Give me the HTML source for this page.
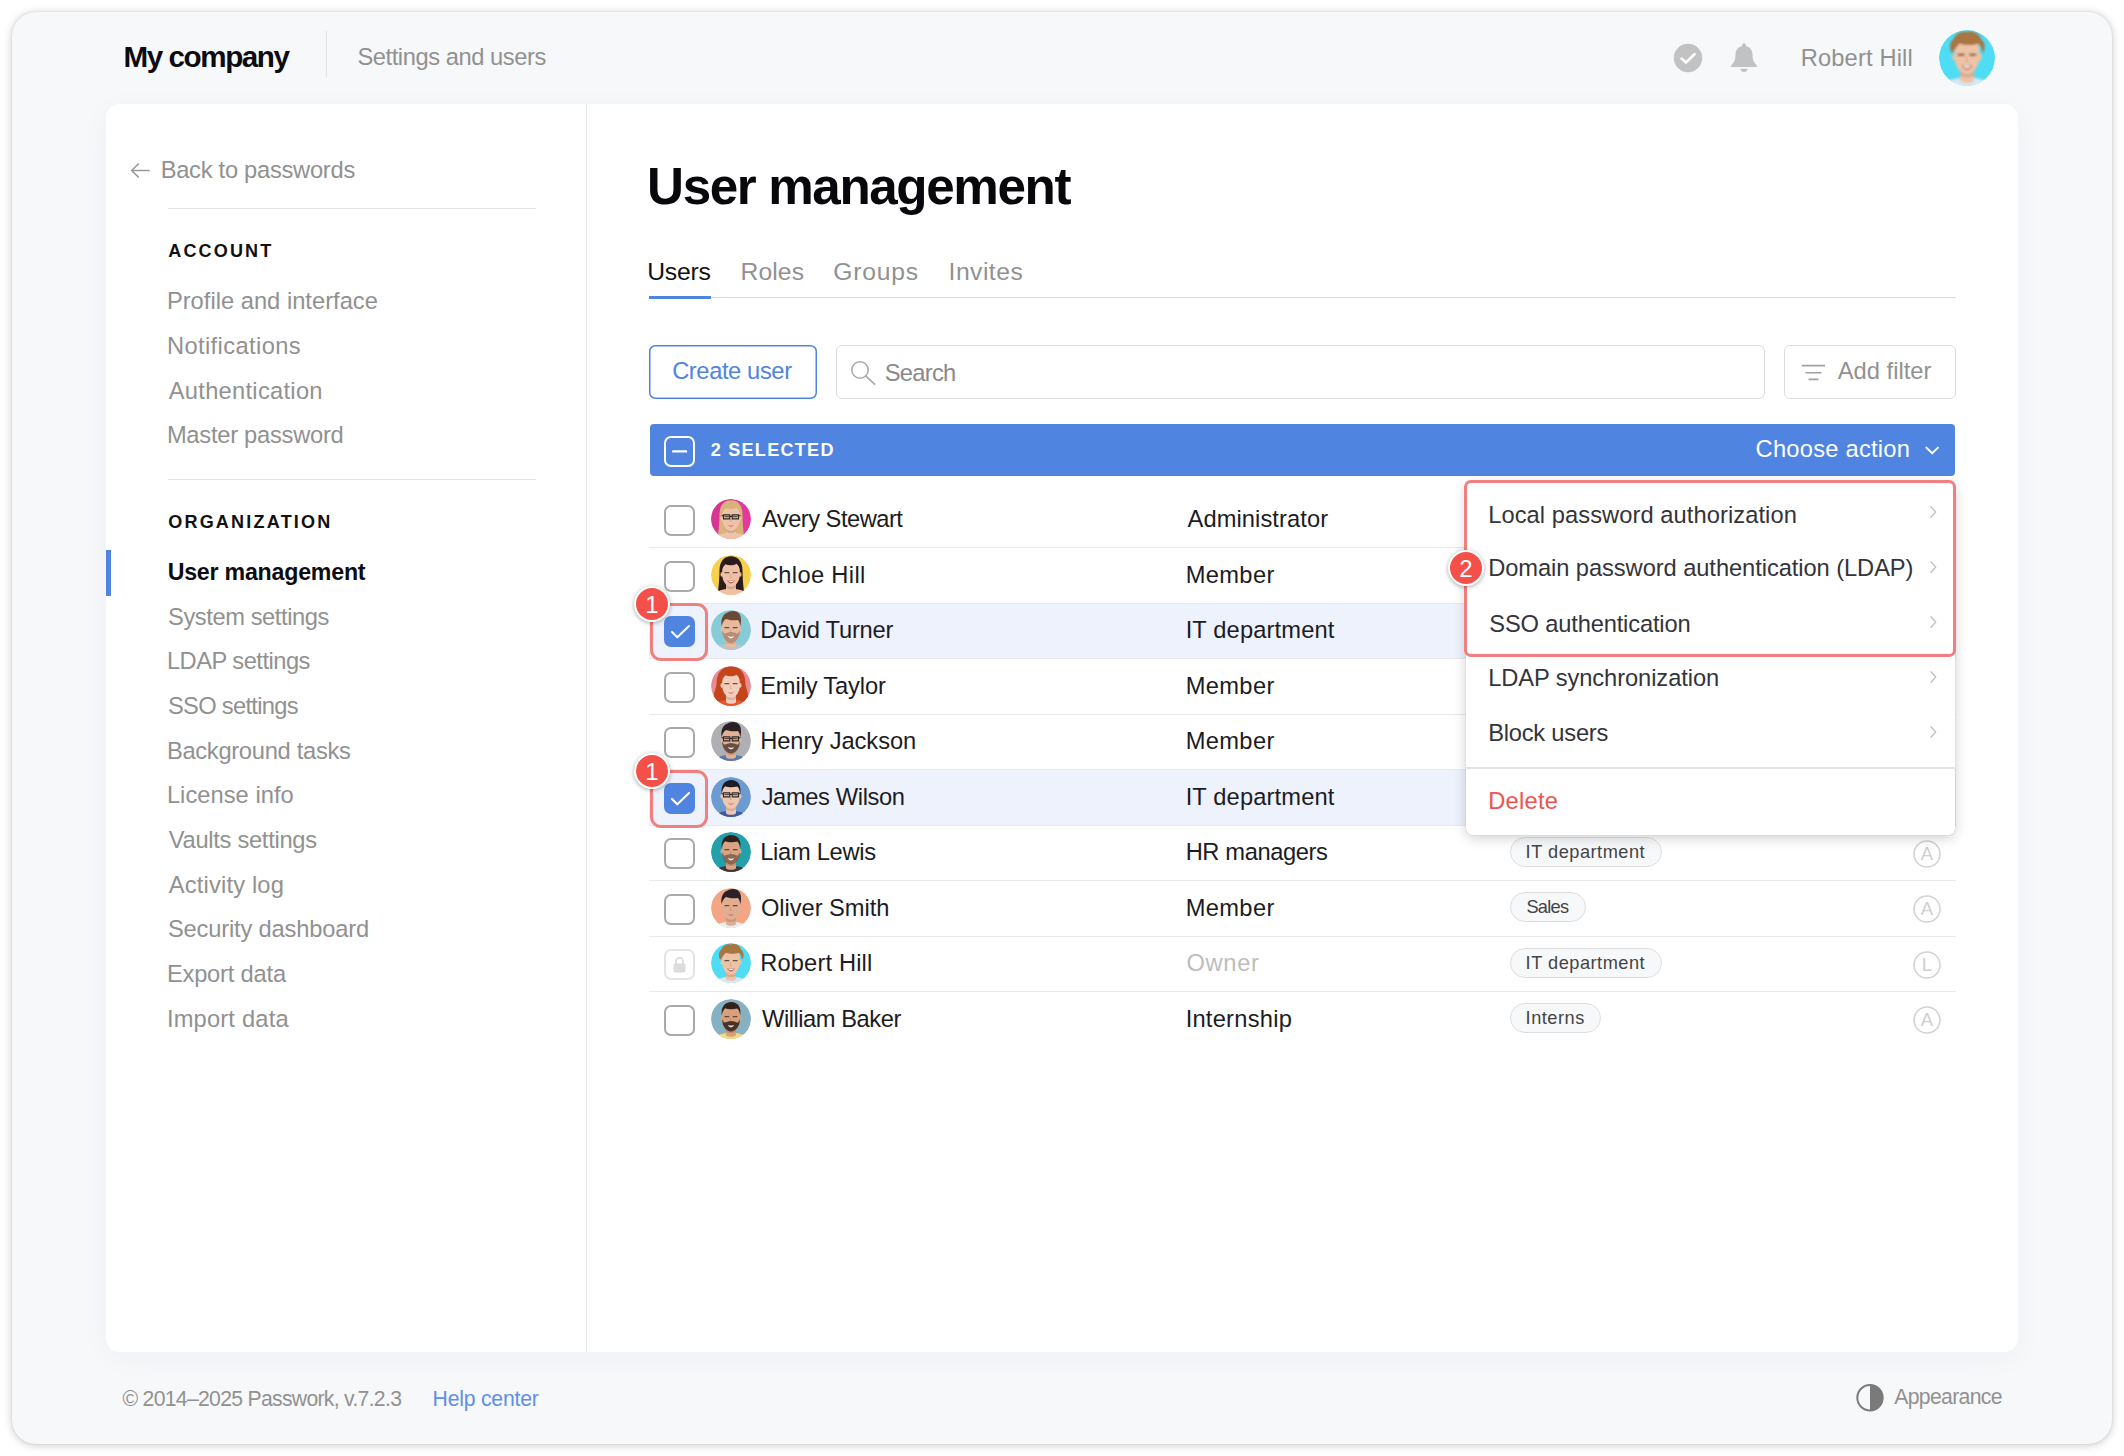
<!DOCTYPE html>
<html lang="en"><head><meta charset="utf-8"><title>User management</title>
<style>
html,body{margin:0;padding:0}
body{width:2124px;height:1456px;position:relative;overflow:hidden;background:#fff;font-family:'Liberation Sans',sans-serif}
.a,.t{position:absolute}
.t{white-space:pre;z-index:5}
.frame{left:12px;top:12px;width:2100px;height:1432px;border-radius:24px;background:#f7f8fa;box-shadow:0 1px 8px rgba(0,0,0,.22),0 0 2px rgba(0,0,0,.10)}
.panel{left:106px;top:104px;width:1912px;height:1248px;border-radius:14px;background:#fff;box-shadow:0 6px 30px rgba(40,50,80,.035)}
.hl{height:1px;background:#e4e4e4}
.vl{width:1px;background:#e4e4e4}
.cb{width:27px;height:27px;border:2px solid #a9a9a9;border-radius:7px;background:#fff;left:664px}
.cb.on{border-color:#4f84e0;background:#4f84e0}
.cb.dis{border-color:#e4e4e4}
.rowsel{left:649px;width:1307px;height:55.5px;background:#eef2fc}
.sep{left:649px;width:1307px;height:1px;background:#e9e9e9;z-index:1}
.red{border:3px solid #f17f7f;border-radius:9px;box-sizing:border-box;z-index:40}
.badge{width:32px;height:32px;border-radius:50%;background:#f4504a;border:2px solid #fff;box-shadow:0 1px 4px rgba(0,0,0,.35);z-index:50;color:#fff;font-size:24px;line-height:34px;text-align:center}
.tag{height:28px;border:1px solid #dedede;border-radius:15px;background:#f7f8fa;left:1509.5px}
.circ{width:24.600px;height:24.600px;border:1.500px solid #d2d2d2;border-radius:50%;left:1913.100px;color:#cfcfcf;font-size:18.500px;line-height:25px;text-align:center}
.av{width:40px;height:40px;border-radius:50%;overflow:hidden;left:710.5px}
.menu{left:1466px;top:482px;width:489px;height:353px;background:#fff;border-radius:7px;box-shadow:0 3px 13px rgba(0,0,0,.19),0 0 2px rgba(0,0,0,.12);z-index:30}
svg{display:block}
h1{margin:0;font-weight:700}
</style></head><body>
<svg width="0" height="0" style="position:absolute"><defs><filter id="bl" x="-10%" y="-10%" width="120%" height="120%"><feGaussianBlur stdDeviation=".6"/></filter><symbol id="av0" viewBox="0 0 40 40"><circle cx="20" cy="20" r="20" fill="#e23a9c"/><ellipse cx="12" cy="14" rx="16" ry="18" fill="#c22a86" opacity=".35"/><g filter="url(#bl)" transform="translate(20 18) scale(1.25) translate(-20 -18)"><path d="M10.800 16c0-7.500 3.800-11.500 9.200-11.500s9.200 4 9.200 11.500c0 6 .6 12 1.200 17l-6 2H15.600l-6-2c.6-5 1.200-11 1.200-17z" fill="#d9b27c"/><path d="M4 41c0-6 5-9 11-10h10c6 1 11 4 11 10z" fill="#f0c3a8"/><path d="M16 26h8v6.500c-1.500 1.800-6.500 1.800-8 0z" fill="#f0c3a8"/><path d="M16 29.500c2.500 1.600 5.500 1.600 8 0v-2h-8z" fill="#000" opacity=".12"/><path d="M13 15.500c0-5 3-8 7-8s7 3 7 8v4c0 5-3.500 9.500-7 9.500s-7-4.500-7-9.500z" fill="#f0c3a8"/><ellipse cx="12.800" cy="19" rx="1.200" ry="2" fill="#f0c3a8"/><ellipse cx="27.200" cy="19" rx="1.200" ry="2" fill="#f0c3a8"/><path d="M17.600 24.200c1.500.900 3.300.900 4.800 0-.5 1.100-1.400 1.600-2.400 1.600s-1.900-.5-2.400-1.600z" fill="#c9626a" opacity=".75"/><path d="M15.200 17.700h3M21.800 17.700h3" stroke="#3a2a25" stroke-width="1.100" stroke-linecap="round" opacity=".75"/><path d="M19.600 19v2.600h1.200" stroke="#000" stroke-width=".5" fill="none" opacity=".18"/><path d="M12 19c-1.500-8 2-13 8-13s9.500 5 8 13c-.3-3.500-1.500-6.500-3.500-8.500-2.500 1.300-6 1.800-9 .5-2 2-3.200 4.500-3.500 8z" fill="#d9b27c"/><path d="M14 16.300h5v3.200h-5zM21 16.300h5v3.200h-5zM19 17.500h2M14 17.300l-1.500-.5M26 17.300l1.500-.5" fill="none" stroke="#2b2b2b" stroke-width=".9"/></g></symbol><symbol id="av1" viewBox="0 0 40 40"><circle cx="20" cy="20" r="20" fill="#f8d04f"/><g filter="url(#bl)" transform="translate(20 18) scale(1.25) translate(-20 -18)"><path d="M10.800 16c0-7.500 3.800-11.500 9.200-11.500s9.200 4 9.200 11.500c0 6 .6 12 1.200 17l-6 2H15.600l-6-2c.6-5 1.200-11 1.200-17z" fill="#2a1d1a"/><path d="M4 41c0-6 5-9 11-10h10c6 1 11 4 11 10z" fill="#f2bfa3"/><path d="M16 26h8v6.500c-1.500 1.800-6.500 1.800-8 0z" fill="#f1c0a4"/><path d="M16 29.500c2.500 1.600 5.500 1.600 8 0v-2h-8z" fill="#000" opacity=".12"/><path d="M13 15.500c0-5 3-8 7-8s7 3 7 8v4c0 5-3.500 9.500-7 9.500s-7-4.500-7-9.500z" fill="#f1c0a4"/><ellipse cx="12.800" cy="19" rx="1.200" ry="2" fill="#f1c0a4"/><ellipse cx="27.200" cy="19" rx="1.200" ry="2" fill="#f1c0a4"/><path d="M17 23.600c2 .8 4 .8 6 0-.6 1.900-1.700 2.700-3 2.700s-2.400-.8-3-2.700z" fill="#a8474f" opacity=".8"/><path d="M17.700 24c1.500.5 3.100.5 4.600 0-.4.900-1.300 1.300-2.300 1.300s-1.900-.4-2.300-1.300z" fill="#fff"/><path d="M15.200 17.700h3M21.800 17.700h3" stroke="#3a2a25" stroke-width="1.100" stroke-linecap="round" opacity=".75"/><path d="M19.600 19v2.600h1.200" stroke="#000" stroke-width=".5" fill="none" opacity=".18"/><path d="M12 19c-1.500-8 2-13 8-13s9.500 5 8 13c-.3-3.500-1.500-6.500-3.500-8.500-2.500 1.300-6 1.800-9 .5-2 2-3.200 4.500-3.500 8z" fill="#2a1d1a"/></g></symbol><symbol id="av2" viewBox="0 0 40 40"><circle cx="20" cy="20" r="20" fill="#86cbd6"/><g filter="url(#bl)" transform="translate(20 18) scale(1.25) translate(-20 -18)"><path d="M4 41c0-6 5-9 11-10h10c6 1 11 4 11 10z" fill="#b9c3c8"/><path d="M16 26h8v6.500c-1.500 1.800-6.500 1.800-8 0z" fill="#e9b99d"/><path d="M16 29.500c2.500 1.600 5.500 1.600 8 0v-2h-8z" fill="#000" opacity=".12"/><path d="M13 15.500c0-5 3-8 7-8s7 3 7 8v4c0 5-3.500 9.500-7 9.500s-7-4.500-7-9.500z" fill="#e9b99d"/><ellipse cx="12.800" cy="19" rx="1.200" ry="2" fill="#e9b99d"/><ellipse cx="27.200" cy="19" rx="1.200" ry="2" fill="#e9b99d"/><path d="M13 19.500c.5 1.500 1 2.500 2 3 1.500-.8 3-1.200 5-1.200s3.500.4 5 1.200c1-.5 1.500-1.500 2-3v1c0 5-3.500 9-7 9s-7-4-7-9z" fill="#8a624b" opacity="0.5"/><path d="M17.500 24.300c1.500.800 3.500.800 5 0-.5 1.300-1.500 1.900-2.500 1.900s-2-.6-2.500-1.900z" fill="#fff" opacity=".85"/><path d="M15.200 17.700h3M21.800 17.700h3" stroke="#3a2a25" stroke-width="1.100" stroke-linecap="round" opacity=".75"/><path d="M19.600 19v2.600h1.200" stroke="#000" stroke-width=".5" fill="none" opacity=".18"/><path d="M12.500 16.500c-1-6 1.500-9.500 4-10.500 2.500-2 7-2.300 9.500 0 2.200 2 2.500 6 1.500 10.500-.4-2.500-1-4-2-5-3 .5-6.500.3-9.500-.8-1.800 1.200-3 3.200-3.500 5.800z" fill="#6b4a36"/></g></symbol><symbol id="av3" viewBox="0 0 40 40"><circle cx="20" cy="20" r="20" fill="#ec8a93"/><g filter="url(#bl)" transform="translate(20 18) scale(1.25) translate(-20 -18)"><path d="M8.500 17c0-8.500 5-13 11.500-13s11.500 4.500 11.500 13c0 4 3 8 2 13s-4 6-8 6H14.500c-4 0-7-1-8-6s2-9 2-13z" fill="#c4451f"/><path d="M4 41c0-6 5-9 11-10h10c6 1 11 4 11 10z" fill="#f0532a"/><path d="M16 26h8v6.500c-1.500 1.800-6.500 1.800-8 0z" fill="#f3cdb9"/><path d="M16 29.500c2.500 1.600 5.500 1.600 8 0v-2h-8z" fill="#000" opacity=".12"/><path d="M13 15.500c0-5 3-8 7-8s7 3 7 8v4c0 5-3.500 9.500-7 9.500s-7-4.500-7-9.500z" fill="#f3cdb9"/><ellipse cx="12.800" cy="19" rx="1.200" ry="2" fill="#f3cdb9"/><ellipse cx="27.200" cy="19" rx="1.200" ry="2" fill="#f3cdb9"/><path d="M17.600 24.200c1.500.900 3.300.900 4.800 0-.5 1.100-1.400 1.600-2.400 1.600s-1.900-.5-2.400-1.600z" fill="#c9626a" opacity=".75"/><path d="M15.200 17.700h3M21.800 17.700h3" stroke="#3a2a25" stroke-width="1.100" stroke-linecap="round" opacity=".75"/><path d="M19.600 19v2.600h1.200" stroke="#000" stroke-width=".5" fill="none" opacity=".18"/><path d="M12 19c-1.500-8 2-13 8-13s9.500 5 8 13c-.3-3.500-1.500-6.500-3.500-8.500-2.500 1.300-6 1.800-9 .5-2 2-3.200 4.500-3.500 8z" fill="#c4451f"/></g></symbol><symbol id="av4" viewBox="0 0 40 40"><circle cx="20" cy="20" r="20" fill="#b0b0b4"/><g filter="url(#bl)" transform="translate(20 18) scale(1.25) translate(-20 -18)"><path d="M4 41c0-6 5-9 11-10h10c6 1 11 4 11 10z" fill="#5a78b0"/><path d="M16 26h8v6.500c-1.500 1.800-6.500 1.800-8 0z" fill="#e2b094"/><path d="M16 29.500c2.500 1.600 5.500 1.600 8 0v-2h-8z" fill="#000" opacity=".12"/><path d="M13 15.500c0-5 3-8 7-8s7 3 7 8v4c0 5-3.500 9.500-7 9.500s-7-4.500-7-9.500z" fill="#e2b094"/><ellipse cx="12.800" cy="19" rx="1.200" ry="2" fill="#e2b094"/><ellipse cx="27.200" cy="19" rx="1.200" ry="2" fill="#e2b094"/><path d="M13 19.500c.5 1.500 1 2.500 2 3 1.500-.8 3-1.200 5-1.200s3.500.4 5 1.200c1-.5 1.500-1.500 2-3v1c0 5-3.500 9-7 9s-7-4-7-9z" fill="#5a4236" opacity="0.9"/><path d="M17.500 24.300c1.500.800 3.500.800 5 0-.5 1.300-1.500 1.900-2.500 1.900s-2-.6-2.500-1.900z" fill="#fff" opacity=".85"/><path d="M15.200 17.700h3M21.800 17.700h3" stroke="#3a2a25" stroke-width="1.100" stroke-linecap="round" opacity=".75"/><path d="M19.600 19v2.600h1.200" stroke="#000" stroke-width=".5" fill="none" opacity=".18"/><path d="M12.500 16.500c-1-6 1.500-9.500 4-10.500 2.500-2 7-2.300 9.500 0 2.200 2 2.500 6 1.500 10.500-.4-2.500-1-4-2-5-3 .5-6.500.3-9.500-.8-1.800 1.200-3 3.200-3.500 5.800z" fill="#2a2422"/><path d="M14 16.300h5v3.200h-5zM21 16.300h5v3.200h-5zM19 17.500h2M14 17.300l-1.500-.5M26 17.300l1.500-.5" fill="none" stroke="#2b2b2b" stroke-width=".9"/></g></symbol><symbol id="av5" viewBox="0 0 40 40"><circle cx="20" cy="20" r="20" fill="#6c9bd2"/><g filter="url(#bl)" transform="translate(20 18) scale(1.25) translate(-20 -18)"><path d="M4 41c0-6 5-9 11-10h10c6 1 11 4 11 10z" fill="#3f5aa8"/><path d="M16 26h8v6.500c-1.500 1.800-6.500 1.800-8 0z" fill="#efc6ae"/><path d="M16 29.500c2.500 1.600 5.500 1.600 8 0v-2h-8z" fill="#000" opacity=".12"/><path d="M13 15.500c0-5 3-8 7-8s7 3 7 8v4c0 5-3.500 9.500-7 9.500s-7-4.500-7-9.500z" fill="#efc6ae"/><ellipse cx="12.800" cy="19" rx="1.200" ry="2" fill="#efc6ae"/><ellipse cx="27.200" cy="19" rx="1.200" ry="2" fill="#efc6ae"/><path d="M17.600 24.200c1.500.900 3.300.900 4.800 0-.5 1.100-1.400 1.600-2.400 1.600s-1.900-.5-2.400-1.600z" fill="#c9626a" opacity=".75"/><path d="M15.200 17.700h3M21.800 17.700h3" stroke="#3a2a25" stroke-width="1.100" stroke-linecap="round" opacity=".75"/><path d="M19.600 19v2.600h1.200" stroke="#000" stroke-width=".5" fill="none" opacity=".18"/><path d="M12.600 16.500c-.8-6.500 2.500-10.500 7.600-10.500s8.200 4 7.200 10.500c-.5-2.500-1.300-4.300-2.400-5.300-3 .8-7 .8-9.600-.2-1.400 1.200-2.300 3-2.800 5.500z" fill="#1e1c28"/><path d="M14 16.300h5v3.200h-5zM21 16.300h5v3.200h-5zM19 17.500h2M14 17.300l-1.500-.5M26 17.300l1.500-.5" fill="none" stroke="#2b2b2b" stroke-width=".9"/></g></symbol><symbol id="av6" viewBox="0 0 40 40"><circle cx="20" cy="20" r="20" fill="#24a0ac"/><g filter="url(#bl)" transform="translate(20 18) scale(1.25) translate(-20 -18)"><path d="M4 41c0-6 5-9 11-10h10c6 1 11 4 11 10z" fill="#3a3a3e"/><path d="M16 26h8v6.500c-1.500 1.800-6.500 1.800-8 0z" fill="#d9a384"/><path d="M16 29.500c2.500 1.600 5.500 1.600 8 0v-2h-8z" fill="#000" opacity=".12"/><path d="M13 15.500c0-5 3-8 7-8s7 3 7 8v4c0 5-3.500 9.500-7 9.500s-7-4.500-7-9.500z" fill="#d9a384"/><ellipse cx="12.800" cy="19" rx="1.200" ry="2" fill="#d9a384"/><ellipse cx="27.200" cy="19" rx="1.200" ry="2" fill="#d9a384"/><path d="M13 19.500c.5 1.500 1 2.500 2 3 1.500-.8 3-1.200 5-1.200s3.500.4 5 1.200c1-.5 1.500-1.500 2-3v1c0 5-3.500 9-7 9s-7-4-7-9z" fill="#5b3f30" opacity="0.6"/><path d="M17.500 24.300c1.500.800 3.500.800 5 0-.5 1.300-1.500 1.900-2.500 1.900s-2-.6-2.500-1.900z" fill="#fff" opacity=".85"/><path d="M15.200 17.700h3M21.800 17.700h3" stroke="#3a2a25" stroke-width="1.100" stroke-linecap="round" opacity=".75"/><path d="M19.600 19v2.600h1.200" stroke="#000" stroke-width=".5" fill="none" opacity=".18"/><path d="M12.600 16.500c-.8-6.500 2.500-10.500 7.600-10.500s8.200 4 7.200 10.500c-.5-2.500-1.300-4.300-2.400-5.300-3 .8-7 .8-9.600-.2-1.400 1.200-2.300 3-2.800 5.500z" fill="#2f241f"/></g></symbol><symbol id="av7" viewBox="0 0 40 40"><circle cx="20" cy="20" r="20" fill="#f3a685"/><g filter="url(#bl)" transform="translate(20 18) scale(1.25) translate(-20 -18)"><path d="M4 41c0-6 5-9 11-10h10c6 1 11 4 11 10z" fill="#e9ecef"/><path d="M16 26h8v6.500c-1.500 1.800-6.500 1.800-8 0z" fill="#e2ae92"/><path d="M16 29.500c2.500 1.600 5.500 1.600 8 0v-2h-8z" fill="#000" opacity=".12"/><path d="M13 15.500c0-5 3-8 7-8s7 3 7 8v4c0 5-3.500 9.500-7 9.500s-7-4.500-7-9.500z" fill="#e2ae92"/><ellipse cx="12.800" cy="19" rx="1.200" ry="2" fill="#e2ae92"/><ellipse cx="27.200" cy="19" rx="1.200" ry="2" fill="#e2ae92"/><path d="M17.600 24.200c1.500.900 3.300.900 4.800 0-.5 1.100-1.400 1.600-2.400 1.600s-1.900-.5-2.400-1.600z" fill="#c9626a" opacity=".75"/><path d="M15.200 17.700h3M21.800 17.700h3" stroke="#3a2a25" stroke-width="1.100" stroke-linecap="round" opacity=".75"/><path d="M19.600 19v2.600h1.200" stroke="#000" stroke-width=".5" fill="none" opacity=".18"/><path d="M12.500 16.500c-1-6 1.500-9.500 4-10.500 2.500-2 7-2.300 9.500 0 2.200 2 2.500 6 1.500 10.500-.4-2.500-1-4-2-5-3 .5-6.500.3-9.500-.8-1.800 1.200-3 3.200-3.500 5.800z" fill="#2a2328"/></g></symbol><symbol id="av8" viewBox="0 0 40 40"><circle cx="20" cy="20" r="20" fill="#4fdcf5"/><g filter="url(#bl)" transform="translate(20 18) scale(1.25) translate(-20 -18)"><path d="M4 41c0-6 5-9 11-10h10c6 1 11 4 11 10z" fill="#d6e8f2"/><path d="M16 26h8v6.500c-1.500 1.800-6.500 1.800-8 0z" fill="#eec2a4"/><path d="M16 29.500c2.500 1.600 5.500 1.600 8 0v-2h-8z" fill="#000" opacity=".12"/><path d="M13 15.500c0-5 3-8 7-8s7 3 7 8v4c0 5-3.500 9.500-7 9.500s-7-4.500-7-9.500z" fill="#eec2a4"/><ellipse cx="12.800" cy="19" rx="1.200" ry="2" fill="#eec2a4"/><ellipse cx="27.200" cy="19" rx="1.200" ry="2" fill="#eec2a4"/><path d="M17 23.600c2 .8 4 .8 6 0-.6 1.900-1.700 2.700-3 2.700s-2.400-.8-3-2.700z" fill="#a8474f" opacity=".8"/><path d="M17.700 24c1.500.5 3.100.5 4.600 0-.4.900-1.300 1.300-2.300 1.300s-1.900-.4-2.300-1.300z" fill="#fff"/><path d="M15.200 17.700h3M21.800 17.700h3" stroke="#3a2a25" stroke-width="1.100" stroke-linecap="round" opacity=".75"/><path d="M19.600 19v2.600h1.200" stroke="#000" stroke-width=".5" fill="none" opacity=".18"/><path d="M11.500 17c-2-3-1.500-6.500 1-8.500 1-3 4.500-4.500 7.500-3.800 3.500-.9 7 .8 8 4 2.500 2 2.800 5.500.8 8.300-.3-2.600-1-4.500-2.300-5.700-3 1.200-7.500 1.200-10.500 0-1.500 1.200-3 3.200-4.500 5.700z" fill="#a9753f"/></g></symbol><symbol id="av9" viewBox="0 0 40 40"><circle cx="20" cy="20" r="20" fill="#86b1c2"/><g filter="url(#bl)" transform="translate(20 18) scale(1.25) translate(-20 -18)"><path d="M4 41c0-6 5-9 11-10h10c6 1 11 4 11 10z" fill="#f0dc82"/><path d="M16 26h8v6.500c-1.500 1.800-6.500 1.800-8 0z" fill="#d9a07c"/><path d="M16 29.500c2.500 1.600 5.500 1.600 8 0v-2h-8z" fill="#000" opacity=".12"/><path d="M13 15.500c0-5 3-8 7-8s7 3 7 8v4c0 5-3.500 9.500-7 9.500s-7-4.500-7-9.500z" fill="#d9a07c"/><ellipse cx="12.800" cy="19" rx="1.200" ry="2" fill="#d9a07c"/><ellipse cx="27.200" cy="19" rx="1.200" ry="2" fill="#d9a07c"/><path d="M13 19.500c.5 1.500 1 2.500 2 3 1.500-.8 3-1.200 5-1.200s3.500.4 5 1.200c1-.5 1.500-1.500 2-3v1c0 5-3.500 9-7 9s-7-4-7-9z" fill="#3b271c" opacity="0.9"/><path d="M17.500 24.300c1.500.800 3.500.800 5 0-.5 1.300-1.500 1.900-2.500 1.900s-2-.6-2.500-1.900z" fill="#fff" opacity=".85"/><path d="M15.200 17.700h3M21.800 17.700h3" stroke="#3a2a25" stroke-width="1.100" stroke-linecap="round" opacity=".75"/><path d="M19.600 19v2.600h1.200" stroke="#000" stroke-width=".5" fill="none" opacity=".18"/><path d="M12.600 16.500c-.8-6.500 2.500-10.500 7.600-10.500s8.200 4 7.200 10.500c-.5-2.500-1.300-4.300-2.400-5.300-3 .8-7 .8-9.600-.2-1.400 1.200-2.300 3-2.800 5.500z" fill="#33241c"/></g></symbol><symbol id="robert" viewBox="0 0 40 40"><circle cx="20" cy="20" r="20" fill="#4fdcf5"/><g filter="url(#bl)" transform="translate(20 18) scale(1.25) translate(-20 -18)"><path d="M4 41c0-6 5-9 11-10h10c6 1 11 4 11 10z" fill="#d6e8f2"/><path d="M16 26h8v6.500c-1.500 1.800-6.500 1.800-8 0z" fill="#eec2a4"/><path d="M16 29.500c2.500 1.600 5.500 1.600 8 0v-2h-8z" fill="#000" opacity=".12"/><path d="M13 15.500c0-5 3-8 7-8s7 3 7 8v4c0 5-3.500 9.500-7 9.500s-7-4.500-7-9.500z" fill="#eec2a4"/><ellipse cx="12.800" cy="19" rx="1.200" ry="2" fill="#eec2a4"/><ellipse cx="27.200" cy="19" rx="1.200" ry="2" fill="#eec2a4"/><path d="M17 23.600c2 .8 4 .8 6 0-.6 1.900-1.700 2.700-3 2.700s-2.400-.8-3-2.700z" fill="#a8474f" opacity=".8"/><path d="M17.700 24c1.500.5 3.100.5 4.600 0-.4.900-1.300 1.300-2.300 1.300s-1.900-.4-2.300-1.300z" fill="#fff"/><path d="M15.200 17.700h3M21.800 17.700h3" stroke="#3a2a25" stroke-width="1.100" stroke-linecap="round" opacity=".75"/><path d="M19.600 19v2.600h1.200" stroke="#000" stroke-width=".5" fill="none" opacity=".18"/><path d="M11.500 17c-2-3-1.500-6.500 1-8.500 1-3 4.500-4.500 7.500-3.800 3.500-.9 7 .8 8 4 2.500 2 2.800 5.500.8 8.300-.3-2.600-1-4.500-2.300-5.700-3 1.200-7.500 1.200-10.500 0-1.500 1.200-3 3.200-4.500 5.700z" fill="#a9753f"/></g></symbol></defs></svg>
<div class="a frame"></div>
<div class="a panel"></div>
<div class="a vl" style="left:586px;top:104px;height:1248px"></div>

<header>
<div class="a vl" style="left:325.5px;top:30.5px;height:46px;background:#e2e2e2"></div>
<svg class="a" style="left:1673px;top:43px" width="30" height="30" viewBox="0 0 30 30"><circle cx="15" cy="15" r="14.25" fill="#c2c2c2"/><path d="M8.600 15.600l4.300 4 8.600-8.400" fill="none" stroke="#fff" stroke-width="2.700" stroke-linecap="round" stroke-linejoin="round"/></svg>
<svg class="a" style="left:1729px;top:42px" width="30" height="32" viewBox="0 0 30 32"><path d="M15 1.200c1.100 0 2 .8 2 1.900v.9c4 1 6.500 4.400 6.500 8.600 0 5.200 1.400 8.300 4.200 10.600.7.600.3 1.800-.7 1.800H3c-1 0-1.400-1.200-.7-1.800 2.800-2.300 4.200-5.400 4.200-10.600 0-4.200 2.500-7.600 6.500-8.600v-.9c0-1.100.9-1.900 2-1.900z" fill="#c2c2c2"/><path d="M11.200 26.800h7.600c-.3 1.900-1.800 3.200-3.800 3.200s-3.500-1.300-3.800-3.200z" fill="#c2c2c2"/></svg>
<svg class="a" style="left:1939px;top:30px;border-radius:50%;overflow:hidden" width="56" height="56" viewBox="0 0 40 40"><use href="#robert"/></svg>
<span class="t" style="left:123.55px;top:38.1px;font-size:29.64px;line-height:38px;color:#0c0c12;letter-spacing:-1.452px;font-weight:700">My company</span>
<span class="t" style="left:357.46px;top:42.4px;font-size:23.7px;line-height:30px;color:#919191;letter-spacing:-0.436px">Settings and users</span>
<span class="t" style="left:1800.65px;top:43.25px;font-size:23.7px;line-height:30px;color:#919191;letter-spacing:0.153px">Robert Hill</span>
</header>
<nav>
<svg class="a" style="left:129px;top:161px" width="22" height="19" viewBox="0 0 22 19"><path d="M20 9.500H3M9.300 3L2.600 9.500 9.300 16" fill="none" stroke="#9a9a9a" stroke-width="1.700" stroke-linecap="round" stroke-linejoin="round"/></svg>
<div class="a hl" style="left:168px;top:208px;width:368px"></div>
<div class="a hl" style="left:168px;top:479px;width:368px"></div>
<div class="a" style="left:106px;top:550px;width:4.500px;height:46px;background:#4f84e0"></div>
<span class="t" style="left:160.65px;top:155.1px;font-size:23.7px;line-height:30px;color:#919191;letter-spacing:-0.263px">Back to passwords</span>
<span class="t" style="left:168.22px;top:240px;font-size:18.05px;line-height:23px;color:#111;letter-spacing:2.145px;font-weight:700">ACCOUNT</span>
<span class="t" style="left:166.9px;top:286.25px;font-size:23.7px;line-height:30px;color:#919191;letter-spacing:0.014px">Profile and interface</span>
<span class="t" style="left:166.9px;top:330.75px;font-size:23.7px;line-height:30px;color:#919191;letter-spacing:0.396px">Notifications</span>
<span class="t" style="left:168.75px;top:375.5px;font-size:23.7px;line-height:30px;color:#919191;letter-spacing:0.279px">Authentication</span>
<span class="t" style="left:166.9px;top:420px;font-size:23.7px;line-height:30px;color:#919191;letter-spacing:-0.251px">Master password</span>
<span class="t" style="left:168.19px;top:511.25px;font-size:18.05px;line-height:23px;color:#111;letter-spacing:2.202px;font-weight:700">ORGANIZATION</span>
<span class="t" style="left:167.66px;top:557px;font-size:23.19px;line-height:30px;color:#0c0c12;letter-spacing:-0.222px;font-weight:700">User management</span>
<span class="t" style="left:168.01px;top:601.67px;font-size:23.7px;line-height:30px;color:#919191;letter-spacing:-0.414px">System settings</span>
<span class="t" style="left:166.9px;top:646.34px;font-size:23.7px;line-height:30px;color:#919191;letter-spacing:-0.511px">LDAP settings</span>
<span class="t" style="left:168.01px;top:691.01px;font-size:23.7px;line-height:30px;color:#919191;letter-spacing:-0.698px">SSO settings</span>
<span class="t" style="left:166.9px;top:735.68px;font-size:23.7px;line-height:30px;color:#919191;letter-spacing:-0.29px">Background tasks</span>
<span class="t" style="left:166.9px;top:780.35px;font-size:23.7px;line-height:30px;color:#919191;letter-spacing:0.043px">License info</span>
<span class="t" style="left:168.75px;top:825.02px;font-size:23.7px;line-height:30px;color:#919191;letter-spacing:-0.284px">Vaults settings</span>
<span class="t" style="left:168.75px;top:869.69px;font-size:23.7px;line-height:30px;color:#919191;letter-spacing:0.174px">Activity log</span>
<span class="t" style="left:168.01px;top:914.36px;font-size:23.7px;line-height:30px;color:#919191;letter-spacing:-0.175px">Security dashboard</span>
<span class="t" style="left:166.9px;top:959.03px;font-size:23.7px;line-height:30px;color:#919191;letter-spacing:-0.196px">Export data</span>
<span class="t" style="left:166.9px;top:1003.7px;font-size:23.7px;line-height:30px;color:#919191;letter-spacing:0.187px">Import data</span>
</nav>
<main>
<h1 class="t" style="left:647.1px;top:153.75px;font-size:51.19px;line-height:66px;color:#08080c;letter-spacing:-1.387px;font-weight:700">User management</h1>
<div class="tabs">
<div class="a" style="left:649px;top:297px;width:1307px;height:1px;background:#dadada"></div>
<div class="a" style="left:649px;top:296px;width:61.500px;height:3px;background:#4f84e0"></div>
<span class="t" style="left:647.21px;top:255.5px;font-size:24.7px;line-height:32px;color:#111;letter-spacing:-0.234px">Users</span>
<span class="t" style="left:740.57px;top:255.5px;font-size:24.7px;line-height:32px;color:#919191;letter-spacing:0.076px">Roles</span>
<span class="t" style="left:833.34px;top:255.5px;font-size:24.7px;line-height:32px;color:#919191;letter-spacing:0.786px">Groups</span>
<span class="t" style="left:948.57px;top:255.5px;font-size:24.7px;line-height:32px;color:#919191;letter-spacing:0.469px">Invites</span>
</div>
<div class="toolbar">
<svg class="a" style="left:649px;top:345px" width="168" height="54" viewBox="0 0 168 54"><rect x=".75" y=".75" width="166.500" height="52.500" rx="5.500" fill="#fff" stroke="#4f84e0" stroke-width="1.500"/></svg>
<div class="a" style="left:835.500px;top:345px;width:927px;height:52px;border:1px solid #dcdcdc;border-radius:6px;background:#fff"></div>
<svg class="a" style="left:849px;top:359px" width="30" height="28" viewBox="0 0 30 28"><circle cx="11" cy="11" r="8.200" fill="none" stroke="#ababab" stroke-width="1.600"/><path d="M17 17.200l8.500 8" stroke="#ababab" stroke-width="1.800" stroke-linecap="round"/></svg>
<div class="a" style="left:1784px;top:345px;width:170px;height:52px;border:1px solid #dcdcdc;border-radius:6px;background:#fff"></div>
<svg class="a" style="left:1800px;top:362px" width="28" height="20" viewBox="0 0 28 20"><path d="M1.800 3.600H25M5.500 10.800h16M8.500 17.400h10" stroke="#a0a0a0" stroke-width="1.600" fill="none"/></svg>
<span class="t" style="left:672.14px;top:355.75px;font-size:23.7px;line-height:30px;color:#4f84e0;letter-spacing:-0.385px">Create user</span>
<span class="t" style="left:884.76px;top:357.5px;font-size:23.7px;line-height:30px;color:#8a8a8a;letter-spacing:-0.704px">Search</span>
<span class="t" style="left:1837.8px;top:355.8px;font-size:23.7px;line-height:30px;color:#919191;letter-spacing:0.01px">Add filter</span>
</div>
<div class="bar">
<div class="a" style="left:650px;top:423.500px;width:1305px;height:52.500px;background:#4f84e0;border-radius:4px"></div>
<div class="a" style="left:664px;top:436px;width:27px;height:27px;border:2px solid #fff;border-radius:7px"></div>
<svg class="a" style="left:664px;top:436px" width="31" height="31" viewBox="0 0 31 31"><path d="M9.200 15.400h12.800" stroke="#fff" stroke-width="2.400" stroke-linecap="round"/></svg>
<svg class="a" style="left:1923px;top:444px" width="18" height="13" viewBox="0 0 18 13"><path d="M3.400 3.600l5.800 5.600 5.800-5.600" fill="none" stroke="#fff" stroke-width="1.900" stroke-linecap="round" stroke-linejoin="round"/></svg>
<span class="t" style="left:710.64px;top:438.8px;font-size:18.05px;line-height:23px;color:#fff;letter-spacing:1.284px;font-weight:700">2 SELECTED</span>
<span class="t" style="left:1755.59px;top:434.2px;font-size:23.7px;line-height:30px;color:#fff;letter-spacing:0.244px">Choose action</span>
</div>
<div class="list">
<div class="row">
<div class="a sep" style="top:547px"></div>
<div class="a cb" style="top:505.0px"></div>
<svg class="a av" style="top:499.0px" width="40" height="40" viewBox="0 0 40 40"><use href="#av0"/></svg>
<span class="t" style="left:762px;top:504.0px;font-size:23.7px;line-height:30px;color:#1c1c24;letter-spacing:-0.514px">Avery Stewart</span>
<span class="t" style="left:1187.5px;top:504.0px;font-size:23.7px;line-height:30px;color:#1c1c24;letter-spacing:0.084px">Administrator</span>
</div>
<div class="row">
<div class="a sep" style="top:603px"></div>
<div class="a cb" style="top:560.5px"></div>
<svg class="a av" style="top:554.5px" width="40" height="40" viewBox="0 0 40 40"><use href="#av1"/></svg>
<span class="t" style="left:760.89px;top:559.5px;font-size:23.7px;line-height:30px;color:#1c1c24;letter-spacing:0.334px">Chloe Hill</span>
<span class="t" style="left:1185.65px;top:559.5px;font-size:23.7px;line-height:30px;color:#1c1c24;letter-spacing:0.36px">Member</span>
</div>
<div class="row">
<div class="a rowsel" style="top:603.0px"></div>
<div class="a sep" style="top:658px"></div>
<div class="a cb on" style="top:616.0px"><svg width="27" height="27" viewBox="0 0 27 27"><path d="M6 13.900l5.300 5.300L23 8" fill="none" stroke="#fff" stroke-width="2.100" stroke-linecap="round" stroke-linejoin="round"/></svg></div>
<svg class="a av" style="top:610.0px" width="40" height="40" viewBox="0 0 40 40"><use href="#av2"/></svg>
<div class="a red" style="left:650px;top:603.0px;width:58px;height:58px;border-radius:11px"></div>
<div class="a badge" style="left:634px;top:586.3px">1</div>
<span class="t" style="left:760.15px;top:615.0px;font-size:23.7px;line-height:30px;color:#1c1c24;letter-spacing:-0.217px">David Turner</span>
<span class="t" style="left:1185.65px;top:615.0px;font-size:23.7px;line-height:30px;color:#1c1c24;letter-spacing:0.145px">IT department</span>
</div>
<div class="row">
<div class="a sep" style="top:714px"></div>
<div class="a cb" style="top:671.5px"></div>
<svg class="a av" style="top:665.5px" width="40" height="40" viewBox="0 0 40 40"><use href="#av3"/></svg>
<span class="t" style="left:760.15px;top:670.5px;font-size:23.7px;line-height:30px;color:#1c1c24;letter-spacing:-0.138px">Emily Taylor</span>
<span class="t" style="left:1185.65px;top:670.5px;font-size:23.7px;line-height:30px;color:#1c1c24;letter-spacing:0.36px">Member</span>
</div>
<div class="row">
<div class="a sep" style="top:769px"></div>
<div class="a cb" style="top:727.0px"></div>
<svg class="a av" style="top:721.0px" width="40" height="40" viewBox="0 0 40 40"><use href="#av4"/></svg>
<span class="t" style="left:760.15px;top:726.0px;font-size:23.7px;line-height:30px;color:#1c1c24;letter-spacing:-0.047px">Henry Jackson</span>
<span class="t" style="left:1185.65px;top:726.0px;font-size:23.7px;line-height:30px;color:#1c1c24;letter-spacing:0.36px">Member</span>
</div>
<div class="row">
<div class="a rowsel" style="top:769.5px"></div>
<div class="a sep" style="top:825px"></div>
<div class="a cb on" style="top:782.5px"><svg width="27" height="27" viewBox="0 0 27 27"><path d="M6 13.900l5.300 5.300L23 8" fill="none" stroke="#fff" stroke-width="2.100" stroke-linecap="round" stroke-linejoin="round"/></svg></div>
<svg class="a av" style="top:776.5px" width="40" height="40" viewBox="0 0 40 40"><use href="#av5"/></svg>
<div class="a red" style="left:650px;top:769.5px;width:58px;height:58px;border-radius:11px"></div>
<div class="a badge" style="left:634px;top:752.8px">1</div>
<span class="t" style="left:761.63px;top:781.5px;font-size:23.7px;line-height:30px;color:#1c1c24;letter-spacing:-0.368px">James Wilson</span>
<span class="t" style="left:1185.65px;top:781.5px;font-size:23.7px;line-height:30px;color:#1c1c24;letter-spacing:0.145px">IT department</span>
</div>
<div class="row">
<div class="a sep" style="top:880px"></div>
<div class="a cb" style="top:838.0px"></div>
<svg class="a av" style="top:832.0px" width="40" height="40" viewBox="0 0 40 40"><use href="#av6"/></svg>
<div class="a tag" style="top:836.9px;width:150px"></div>
<svg class="a" style="left:1912px;top:838.60px" width="30" height="30" viewBox="0 0 30 30"><circle cx="15" cy="15" r="13" fill="none" stroke="#d3d3d3" stroke-width="1.600"/><text x="15" y="21.300" text-anchor="middle" font-family="Liberation Sans, sans-serif" font-size="18.500" fill="#cfcfcf">A</text></svg>
<span class="t" style="left:760.15px;top:837.0px;font-size:23.7px;line-height:30px;color:#1c1c24;letter-spacing:-0.273px">Liam Lewis</span>
<span class="t" style="left:1185.65px;top:837.0px;font-size:23.7px;line-height:30px;color:#1c1c24;letter-spacing:-0.381px">HR managers</span>
<span class="t" style="left:1525.58px;top:840.8px;font-size:18.2px;line-height:23px;color:#444;letter-spacing:0.514px">IT department</span>
</div>
<div class="row">
<div class="a sep" style="top:936px"></div>
<div class="a cb" style="top:893.5px"></div>
<svg class="a av" style="top:887.5px" width="40" height="40" viewBox="0 0 40 40"><use href="#av7"/></svg>
<div class="a tag" style="top:892.4px;width:74.5px"></div>
<svg class="a" style="left:1912px;top:894.10px" width="30" height="30" viewBox="0 0 30 30"><circle cx="15" cy="15" r="13" fill="none" stroke="#d3d3d3" stroke-width="1.600"/><text x="15" y="21.300" text-anchor="middle" font-family="Liberation Sans, sans-serif" font-size="18.500" fill="#cfcfcf">A</text></svg>
<span class="t" style="left:760.89px;top:892.5px;font-size:23.7px;line-height:30px;color:#1c1c24;letter-spacing:-0.033px">Oliver Smith</span>
<span class="t" style="left:1185.65px;top:892.5px;font-size:23.7px;line-height:30px;color:#1c1c24;letter-spacing:0.36px">Member</span>
<span class="t" style="left:1526.43px;top:896.3px;font-size:18.2px;line-height:23px;color:#444;letter-spacing:-0.697px">Sales</span>
</div>
<div class="row">
<div class="a sep" style="top:991px"></div>
<div class="a cb dis" style="top:949.0px"><svg width="27" height="27" viewBox="0 0 27 27"><rect x="7.500" y="12.500" width="12" height="9" rx="1.500" fill="#dcdcdc"/><path d="M10 13v-2.800a3.500 3.500 0 0 1 7 0V13" fill="none" stroke="#dcdcdc" stroke-width="1.800"/></svg></div>
<svg class="a av" style="top:943.0px" width="40" height="40" viewBox="0 0 40 40"><use href="#av8"/></svg>
<div class="a tag" style="top:947.9px;width:150px"></div>
<svg class="a" style="left:1912px;top:949.60px" width="30" height="30" viewBox="0 0 30 30"><circle cx="15" cy="15" r="13" fill="none" stroke="#d3d3d3" stroke-width="1.600"/><text x="15" y="21.300" text-anchor="middle" font-family="Liberation Sans, sans-serif" font-size="18.500" fill="#cfcfcf">L</text></svg>
<span class="t" style="left:760.15px;top:948.0px;font-size:23.7px;line-height:30px;color:#1c1c24;letter-spacing:0.153px">Robert Hill</span>
<span class="t" style="left:1186.39px;top:948.0px;font-size:23.7px;line-height:30px;color:#bdbdbd;letter-spacing:0.706px">Owner</span>
<span class="t" style="left:1525.58px;top:951.8px;font-size:18.2px;line-height:23px;color:#444;letter-spacing:0.514px">IT department</span>
</div>
<div class="row">
<div class="a cb" style="top:1004.5px"></div>
<svg class="a av" style="top:998.5px" width="40" height="40" viewBox="0 0 40 40"><use href="#av9"/></svg>
<div class="a tag" style="top:1003.4px;width:89.5px"></div>
<svg class="a" style="left:1912px;top:1005.10px" width="30" height="30" viewBox="0 0 30 30"><circle cx="15" cy="15" r="13" fill="none" stroke="#d3d3d3" stroke-width="1.600"/><text x="15" y="21.300" text-anchor="middle" font-family="Liberation Sans, sans-serif" font-size="18.500" fill="#cfcfcf">A</text></svg>
<span class="t" style="left:762px;top:1003.5px;font-size:23.7px;line-height:30px;color:#1c1c24;letter-spacing:-0.457px">William Baker</span>
<span class="t" style="left:1185.65px;top:1003.5px;font-size:23.7px;line-height:30px;color:#1c1c24;letter-spacing:0.237px">Internship</span>
<span class="t" style="left:1525.58px;top:1007.3px;font-size:18.2px;line-height:23px;color:#444;letter-spacing:0.525px">Interns</span>
</div>
</div>
<div class="dropdown">
<div class="a menu"></div>
<div class="a hl" style="left:1466px;top:767px;width:489px;z-index:31;background:#e2e2e2;height:1.500px"></div>
<svg class="a" style="left:1927px;top:505.4px;z-index:31" width="12" height="14" viewBox="0 0 12 14"><path d="M4 1.800L8.700 7 4 12.200" fill="none" stroke="#c2c2c2" stroke-width="1.400" stroke-linecap="round" stroke-linejoin="round"/></svg>
<svg class="a" style="left:1927px;top:560.4px;z-index:31" width="12" height="14" viewBox="0 0 12 14"><path d="M4 1.800L8.700 7 4 12.200" fill="none" stroke="#c2c2c2" stroke-width="1.400" stroke-linecap="round" stroke-linejoin="round"/></svg>
<svg class="a" style="left:1927px;top:615.4px;z-index:31" width="12" height="14" viewBox="0 0 12 14"><path d="M4 1.800L8.700 7 4 12.200" fill="none" stroke="#c2c2c2" stroke-width="1.400" stroke-linecap="round" stroke-linejoin="round"/></svg>
<svg class="a" style="left:1927px;top:670px;z-index:31" width="12" height="14" viewBox="0 0 12 14"><path d="M4 1.800L8.700 7 4 12.200" fill="none" stroke="#c2c2c2" stroke-width="1.400" stroke-linecap="round" stroke-linejoin="round"/></svg>
<svg class="a" style="left:1927px;top:725px;z-index:31" width="12" height="14" viewBox="0 0 12 14"><path d="M4 1.800L8.700 7 4 12.200" fill="none" stroke="#c2c2c2" stroke-width="1.400" stroke-linecap="round" stroke-linejoin="round"/></svg>
<div class="a red" style="left:1464px;top:480px;width:492px;height:177px;border-radius:7px"></div>
<div class="a badge" style="left:1448px;top:550.400px">2</div>
<span class="t" style="left:1488.15px;top:499.5px;font-size:23.7px;line-height:30px;color:#34343a;letter-spacing:0.071px;z-index:32">Local password authorization</span>
<span class="t" style="left:1488.15px;top:553.25px;font-size:23.7px;line-height:30px;color:#34343a;letter-spacing:-0.071px;z-index:32">Domain password authentication (LDAP)</span>
<span class="t" style="left:1489.26px;top:608.75px;font-size:23.7px;line-height:30px;color:#34343a;letter-spacing:-0.161px;z-index:32">SSO authentication</span>
<span class="t" style="left:1488.15px;top:662.5px;font-size:23.7px;line-height:30px;color:#34343a;letter-spacing:-0.084px;z-index:32">LDAP synchronization</span>
<span class="t" style="left:1488.15px;top:717.75px;font-size:23.7px;line-height:30px;color:#34343a;letter-spacing:-0.22px;z-index:32">Block users</span>
<span class="t" style="left:1488.15px;top:785.75px;font-size:23.7px;line-height:30px;color:#ee5350;letter-spacing:0.261px;z-index:32">Delete</span>
</div>
</main>
<footer>
<svg class="a" style="left:1855px;top:1383px" width="30" height="30" viewBox="0 0 30 30"><circle cx="15" cy="14.800" r="12.700" fill="none" stroke="#7a7a7a" stroke-width="2"/><path d="M15 2.100a12.700 12.700 0 0 1 0 25.400z" fill="#7a7a7a"/></svg>
<span class="t" style="left:122.5px;top:1384.6px;font-size:21.2px;line-height:27px;color:#919191;letter-spacing:-0.702px">© 2014–2025 Passwork, v.7.2.3</span>
<span class="t" style="left:432.59px;top:1384.6px;font-size:21.2px;line-height:27px;color:#5f8fe6;letter-spacing:-0.215px">Help center</span>
<span class="t" style="left:1894.25px;top:1383.4px;font-size:21.2px;line-height:27px;color:#919191;letter-spacing:-0.664px">Appearance</span>
</footer>
</body></html>
